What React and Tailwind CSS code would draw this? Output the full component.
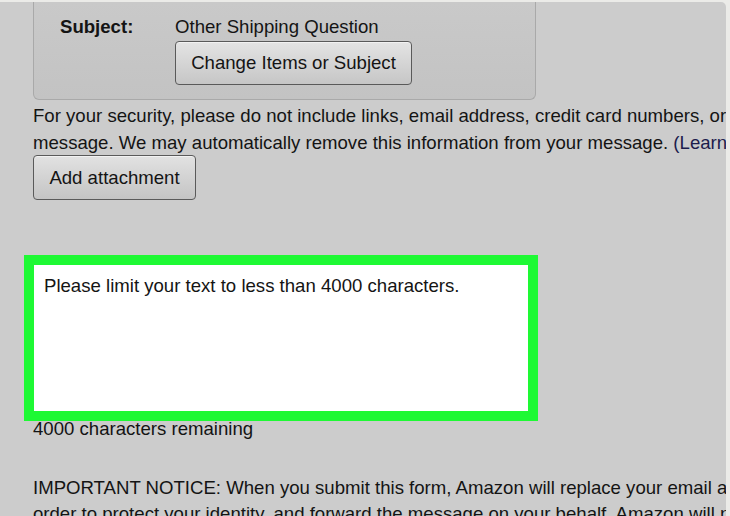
export default function App() {
  return (
    <div
      className="w-[730px] h-[516px] overflow-hidden bg-[#ebebe8] pt-[2px]"
      style={{ fontFamily: '"Liberation Sans", Arial, sans-serif' }}
    >
      <div className="w-[726px] h-[520px] bg-[#cccccc] rounded-tr-[5px] overflow-hidden text-[18.6px] text-[#141414]">
        <div className="ml-[33px] w-[503px] h-[98px] bg-gradient-to-b from-[#c9c9c9] to-[#c3c3c3] border-x border-b border-[#a9a9a9] rounded-b-[6px] flex pt-[13px]">
          <div className="w-[141px] pl-[26px] font-bold leading-[24px]">Subject:</div>
          <div className="flex flex-col items-start">
            <div className="leading-[24px]">Other Shipping Question</div>
            <button className="mt-[2px] h-[44px] w-[237px] rounded-[4px] border border-[#5a5a5a] bg-gradient-to-b from-[#e4e4e4] to-[#c6c6c6] text-[18.6px] text-[#141414] shadow-[inset_0_1px_0_#f2f2f2]">
              Change Items or Subject
            </button>
          </div>
        </div>
        <div className="pl-[33px] mt-[2px] leading-[27px] whitespace-nowrap">
          <div>For your security, please do not include links, email address, credit card numbers, or</div>
          <div>
            message. We may automatically remove this information from your message.{" "}
            <span className="text-[#1c1c4c]">(Learn more)</span>
          </div>
        </div>
        <div className="pl-[33px] -mt-[1px]">
          <button className="h-[45px] w-[163px] rounded-[4px] border border-[#5a5a5a] bg-gradient-to-b from-[#e2e2e2] to-[#c4c4c4] text-[18.6px] text-[#141414] shadow-[inset_0_1px_0_#f2f2f2]">
            Add attachment
          </button>
        </div>
        <div className="ml-[34px] mt-[65px] relative z-10 w-[494px] h-[146px] bg-white outline-[10px] outline-solid outline-[#1ef934] px-[10px] pt-[9px] leading-[24px]">
          Please limit your text to less than 4000 characters.
        </div>
        <div className="pl-[33px] mt-[5px] leading-[26px]">4000 characters remaining</div>
        <div className="pl-[33px] mt-[33px] leading-[26px] whitespace-nowrap">
          <div>IMPORTANT NOTICE: When you submit this form, Amazon will replace your email address in</div>
          <div>order to protect your identity, and forward the message on your behalf. Amazon will not</div>
        </div>
      </div>
    </div>
  );
}
